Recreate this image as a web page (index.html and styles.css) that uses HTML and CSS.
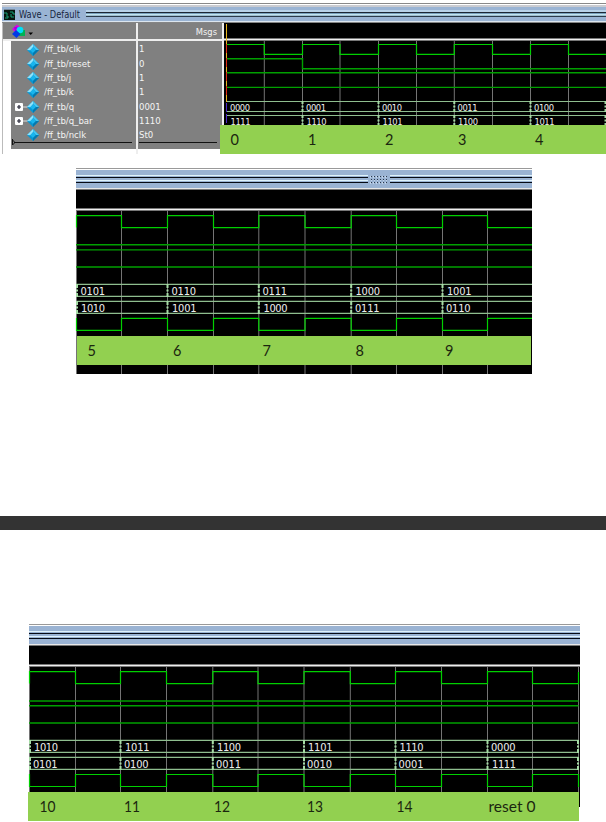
FILE: index.html
```html
<!DOCTYPE html>
<html lang="en">
<head>
<meta charset="utf-8">
<title>Wave - Default</title>
<link rel="stylesheet" href="styles.css">
</head>
<body>
<svg class="defs" width="0" height="0" aria-hidden="true">
  <symbol id="gem" viewBox="0 0 12 12">
    <path d="M6 0 12 6 6 12 0 6Z" fill="#0797d3"/>
    <path d="M6 0 0 6 3.3 6.2 6.2 3Z" fill="#8fe2fa"/>
    <path d="M6 0 12 6 9 6.1 6.2 3Z" fill="#48c5ef"/>
    <path d="M6.2 3 9 6.1 6 9 3.3 6.2Z" fill="#18b5ee"/>
    <path d="M12 6 6 12 6 9 9 6.1Z" fill="#0678ad"/>
  </symbol>
</svg>

<section class="window">
  <header class="title">
    <svg class="app-icon" viewBox="0 0 11 11"><path d="M0 0H11V11H0Z" fill="#07140f"/><path d="M0 4H3V8H5M6 3H9V5H11M1 9H4M7 8V5M7 8H10" fill="none" stroke="#16a078"/><path d="M0 .5H11" stroke="#789"/></svg>
    <svg class="title-text" width="64" height="15"><text x="0" y="10.500" textLength="61" lengthAdjust="spacingAndGlyphs">Wave - Default</text></svg>
    <span class="grip"></span>
  </header>
  <div class="body">
    <div class="names">
      <div class="tools">
        <svg width="24" height="17" viewBox="0 0 24 17"><path d="M3 6 8 1.500 12 5 7 10Z" fill="#d900e8"/><path d="M10 7H16V13H10Z" fill="#00b354"/><path d="M5 4H9L6 8Z" fill="#a400df"/><circle cx="11" cy="7" r="3.300" fill="#00dff5"/><path d="M7 7 11.500 11 7.500 15 3 11Z" fill="#0039e6"/><path d="M19.500 9.500H24L21.700 12Z" fill="#000"/></svg>
      </div>
      <ul>
        <li><i></i><svg class="gem"><use href="#gem"/></svg><span>/ff_tb/clk</span></li>
        <li><i></i><svg class="gem"><use href="#gem"/></svg><span>/ff_tb/reset</span></li>
        <li><i></i><svg class="gem"><use href="#gem"/></svg><span>/ff_tb/j</span></li>
        <li><i></i><svg class="gem"><use href="#gem"/></svg><span>/ff_tb/k</span></li>
        <li><i><svg viewBox="0 0 13 8"><path d="M8 4H13" stroke="#ddd"/><rect width="8" height="8" rx="1" fill="#fff"/><path d="M2 4H6M4 2V6" stroke="#223" stroke-width="1.200"/></svg></i><svg class="gem"><use href="#gem"/></svg><span>/ff_tb/q</span></li>
        <li><i><svg viewBox="0 0 13 8"><path d="M8 4H13" stroke="#ddd"/><rect width="8" height="8" rx="1" fill="#fff"/><path d="M2 4H6M4 2V6" stroke="#223" stroke-width="1.200"/></svg></i><svg class="gem"><use href="#gem"/></svg><span>/ff_tb/q_bar</span></li>
        <li><i></i><svg class="gem"><use href="#gem"/></svg><span>/ff_tb/nclk</span></li>
      </ul>
      <svg class="end" viewBox="0 0 125 8"><path d="M1.500 -2V4" stroke="#111"/><path d="M1.500 -1 4 1.500 1.500 4M3 1.500H121" fill="none" stroke="#111"/></svg>
    </div>
    <div class="values">
      <div class="tools">Msgs</div>
      <ul><li>1</li><li>0</li><li>1</li><li>1</li><li>0001</li><li>1110</li><li>St0</li></ul>
      <svg class="end" viewBox="0 0 84 8"><path d="M1 1.500H79" stroke="#111"/></svg>
    </div>
    <svg class="wave" width="382" height="131" viewBox="224 23 382 131">
      <path d="M224 23H606V149H224Z"/>
      <path class="rule" d="M224 39.500H606"/>
      <path class="grid" d="M264.300 41V125M302.500 41V125M340 41V125M378.500 41V125M416.500 41V125M454.300 41V125M492.500 41V125M530.500 41V125M568.500 41V125"/>
      <path class="hi" d="M226.500 44.500H264.300V54.400H302.500V44.500H340V54.400H378.500V44.500H416.500V54.400H454.300V44.500H492.500V54.400H530.500V44.500H568.500V54.400H606"/>
      <path class="sig" d="M226.500 58.700H302.500V68.700H606M226.500 72.700H606M226.500 87.400H606"/>
      <path class="bus" d="M227 101.500H606M227 111.500H606M227 115.500H606"/>
      <path class="edge small" d="M302.500 101V112M378.500 101V112M454.300 101V112M530.500 101V112M605.500 101V112M302.500 115V125M378.500 115V125M454.300 115V125M530.500 115V125M605.500 115V125"/>
      <path d="M226.500 24V102" stroke="#e8b51c"/>
      <path d="M226.500 44V100" stroke="#e02a12" stroke-dasharray="9 5"/>
      <path d="M226.500 103V125" stroke="#4b28c8" stroke-dasharray="9 2"/>
      <g class="num small">
        <text x="230" y="110.500" textLength="20">0000</text><text x="306" y="110.500" textLength="20">0001</text><text x="382" y="110.500" textLength="20">0010</text><text x="457.500" y="110.500" textLength="20">0011</text><text x="534" y="110.500" textLength="20">0100</text>
        <text x="230.500" y="124.800" textLength="20">1111</text><text x="306.500" y="124.800" textLength="20">1110</text><text x="382.500" y="124.800" textLength="20">1101</text><text x="458" y="124.800" textLength="20">1100</text><text x="534.500" y="124.800" textLength="20">1011</text>
      </g>
      <path class="strip" d="M220 125H606V154H220Z"/>
      <g class="lab"><text x="230.500" y="145">0</text><text x="308" y="145">1</text><text x="385" y="145">2</text><text x="458" y="145">3</text><text x="535" y="145">4</text></g>
    </svg>
  </div>
</section>

<section class="pane second">
  <div class="bar"><svg class="handle" viewBox="0 0 22 9"><path d="M0 0H22V9H0Z" fill="#9ab3d3"/><path d="M2 2H20M3 5H21M2 8H20" stroke="#e8f4ff" stroke-dasharray="1 2"/><path d="M3 1.500H21M3 4.500H21M3 7.500H21" stroke="#29364a" stroke-dasharray="1 2"/></svg></div>
  <svg class="wave" width="456" height="184" viewBox="76 190 456 184">
    <path d="M76 190H532V374H76Z"/>
    <path class="rule" d="M76 209.500H532"/>
    <path class="grid" d="M76.500 211V374M121.500 211V374M167.500 211V374M213.500 211V374M258.800 211V374M305 211V374M351.200 211V374M396.500 211V374M442.500 211V374M487.500 211V374"/>
    <path class="hi" d="M76.500 227.500V215.600H121.500V227.600H167.500V215.600H213.500V227.600H258.800V215.600H305V227.600H351.200V215.600H396.500V227.600H442.500V215.600H487.500V227.600H532"/>
    <path class="sig" d="M76 244.800H532M76 249.900H532M76 267H532"/>
    <path class="bus" d="M76 284.300H532M76 296.300H532M76 301.300H532M76 313.300H532"/>
    <path class="edge" d="M77 284V297M167.500 284V297M258.800 284V297M351.200 284V297M442.500 284V297M77 301V314M167.500 301V314M258.800 301V314M351.200 301V314M442.500 301V314"/>
    <path class="hi" d="M76.500 318V330.400H121.500V318.400H167.500V330.400H213.500V318.400H258.800V330.400H305V318.400H351.200V330.400H396.500V318.400H442.500V330.400H487.500V318.400H532"/>
    <g class="num">
      <text x="80.500" y="295" textLength="24.500">0101</text><text x="171.500" y="295" textLength="24.500">0110</text><text x="262.500" y="295" textLength="24.500">0111</text><text x="355.500" y="295" textLength="24.500">1000</text><text x="447" y="295" textLength="24.500">1001</text>
      <text x="81" y="312" textLength="24">1010</text><text x="172" y="312" textLength="24.500">1001</text><text x="263.500" y="312" textLength="24">1000</text><text x="355" y="312" textLength="24.500">0111</text><text x="446" y="312" textLength="24.500">0110</text>
    </g>
    <path class="strip" d="M77 336H531V365H77Z"/>
    <g class="lab"><text x="87.500" y="356.300">5</text><text x="173" y="356.300">6</text><text x="262.500" y="356.300">7</text><text x="355.500" y="356.300">8</text><text x="445" y="356.300">9</text></g>
  </svg>
</section>

<div class="page-break"></div>

<section class="pane third">
  <div class="bar"></div>
  <svg class="wave" width="551" height="175" viewBox="29 646 551 175">
    <path d="M29 646H580V807H29Z"/>
    <path class="rule" d="M29 665.500H580"/>
    <path class="grid" d="M29.500 667V792M75.500 667V792M120.500 667V792M166.500 667V792M212.800 667V792M258 667V792M304 667V792M350.300 667V792M395.500 667V792M441.500 667V792M487.500 667V792M532.500 667V792M578.500 667V792"/>
    <path class="hi" d="M29.500 683.500V671.600H75.500V683.600H120.500V671.600H166.500V683.600H212.800V671.600H258V683.600H304V671.600H350.300V683.600H395.500V671.600H441.500V683.600H487.500V671.600H532.500V683.600H578.500V672"/>
    <path class="sig" d="M29 701H578.500M29 705.800H578.500M29 723H578.500"/>
    <path class="bus" d="M29 740.400H578.500M29 752.400H578.500M29 757.400H578.500M29 769.400H578.500"/>
    <path class="edge" d="M30 740V753M120.500 740V753M212.800 740V753M304 740V753M395.500 740V753M487.500 740V753M578 740V753M30 757V770M120.500 757V770M212.800 757V770M304 757V770M395.500 757V770M487.500 757V770M578 757V770"/>
    <path class="hi" d="M29.500 774V786.500H75.500V774.500H120.500V786.500H166.500V774.500H212.800V786.500H258V774.500H304V786.500H350.300V774.500H395.500V786.500H441.500V774.500H487.500V786.500H532.500V774.500H578.500V787"/>
    <g class="num">
      <text x="34" y="751" textLength="24">1010</text><text x="125" y="751" textLength="24.500">1011</text><text x="217" y="751" textLength="24">1100</text><text x="308" y="751" textLength="24.500">1101</text><text x="399.500" y="751" textLength="24">1110</text><text x="491" y="751" textLength="24.500">0000</text>
      <text x="33" y="768" textLength="24.500">0101</text><text x="124" y="768" textLength="24.500">0100</text><text x="216" y="768" textLength="25">0011</text><text x="307" y="768" textLength="25">0010</text><text x="398.500" y="768" textLength="25">0001</text><text x="492" y="768" textLength="24">1111</text>
    </g>
    <path class="strip" d="M28 792H579V821H28Z"/>
    <g class="lab"><text x="39.500" y="812" textLength="16" lengthAdjust="spacingAndGlyphs">10</text><text x="124" y="812" textLength="16" lengthAdjust="spacingAndGlyphs">11</text><text x="214" y="812" textLength="16" lengthAdjust="spacingAndGlyphs">12</text><text x="307" y="812" textLength="16" lengthAdjust="spacingAndGlyphs">13</text><text x="396.500" y="812" textLength="16" lengthAdjust="spacingAndGlyphs">14</text><text x="488.500" y="812" textLength="47" lengthAdjust="spacingAndGlyphs">reset 0</text></g>
  </svg>
</section>
</body>
</html>
```
FILE: styles.css
```css
* { box-sizing: border-box; }
body { margin: 0; background: #fff; width: 606px; height: 822px; overflow: hidden; font-family: "DejaVu Sans Condensed", "DejaVu Sans", sans-serif; }
svg { display: block; }
.defs { height: 0; }
ul { list-style: none; margin: 0; padding: 0; }

.window { margin: 3px 0 0 2px; height: 151px; border-top: 1px solid #888; padding-top: 1px; }
.title { height: 18px; padding: 2px 0 1px 2px; display: flex; background: linear-gradient(#c9cbd1 0 2px, #9ab4d4 2px 16px, #dce6ef 16px 17px, #858585 17px); }
.app-icon { width: 11px; height: 11px; margin-top: 2px; }
.title-text { margin-left: 4px; font-size: 10px; fill: #17263d; overflow: visible; }
.grip { flex: 1; margin-left: 3px; height: 8px; margin-top: 3px; background: linear-gradient(#b9d3e9 0 2px, #1d2733 2px 3px, #79a0bd 3px 4px, #c3e5ee 4px 5px, #9dbed2 5px 6px, #2c3c4a 6px 7px, #9ab4d4 7px); }
.body { display: grid; grid-template-columns: 134px 88px 382px; height: 126px; }
.tools { height: 18px; background: #808080; border-bottom: 2px solid #eee; color: #f4f4f4; font-size: 9.3px; line-height: 17px; }
.names { border-left: 1px solid #bbb; }
.names .tools svg { margin-left: 6px; }
.names ul, .values ul { background: #808080; height: 100px; padding-top: 1.4px; }
.names ul { margin-left: 8px; }
.names li { display: flex; align-items: center; }
.names i { width: 16px; padding-left: 4px; }
.names i svg { width: 13px; height: 8px; }
.gem { width: 12px; height: 12px; }
.names li span { margin-left: 5px; }
li { height: 14.3px; line-height: 14.3px; font-size: 9.5px; color: #f4f4f4; white-space: pre; }
.end { height: 8px; background: #808080; overflow: visible; }
.names .end { width: 125px; margin-left: 8px; }
.values { border-left: 2px solid #eee; border-right: 2px solid #eee; }
.values .tools { text-align: right; padding-right: 5px; }
.values .end { width: 84px; }
.values li { padding-left: 1px; }

.wave { overflow: visible; }
.wave path { stroke-width: 1; }
.wave .rule { stroke: #eee; stroke-width: 2; }
.grid { stroke: #747474; }
.hi, .sig, .bus, .edge { fill: none; }
.wave .hi { stroke: #00d000; stroke-width: 1.2; }
.wave .sig { stroke: #00a000; stroke-width: 1.4; }
.wave .bus { stroke: #8fbe8f; stroke-width: 1.2; }
.wave .edge { stroke: #a5dca5; stroke-width: 2; stroke-dasharray: 4 1.5 2 1.5 4 0; }
.wave .edge.small { stroke-dasharray: 3 1.5 2 1.5 3 0; }
.num { fill: #eee; font-size: 11px; }
.num.small { font-size: 9.3px; }
.strip { fill: #92d050; }
.lab { font-family: Lato, sans-serif; font-size: 14.5px; fill: #1b260f; }

.pane { border-top: 1px solid #999; padding-top: 1px; }
.bar { height: 20px; background: linear-gradient(#9ab3d3 0 5px, #dff2fa 5px 6px, #9ab3d3 6px 7px, #050a14 7px 8px, #9ab3d3 8px 10px, #dff2fa 10px 11px, #9ab3d3 11px 12px, #050a14 12px 13px, #9ab3d3 13px 18px, #e8e8e8 18px 19px, #777 19px); }
.second { width: 456px; margin: 14px 0 0 76px; height: 206px; }
.second .bar { padding: 5px 0 0 292px; }
.handle { width: 22px; height: 9px; }
.page-break { height: 14px; margin-top: 142px; background: #333; }
.third { width: 551px; margin: 94px 0 0 29px; }
```
